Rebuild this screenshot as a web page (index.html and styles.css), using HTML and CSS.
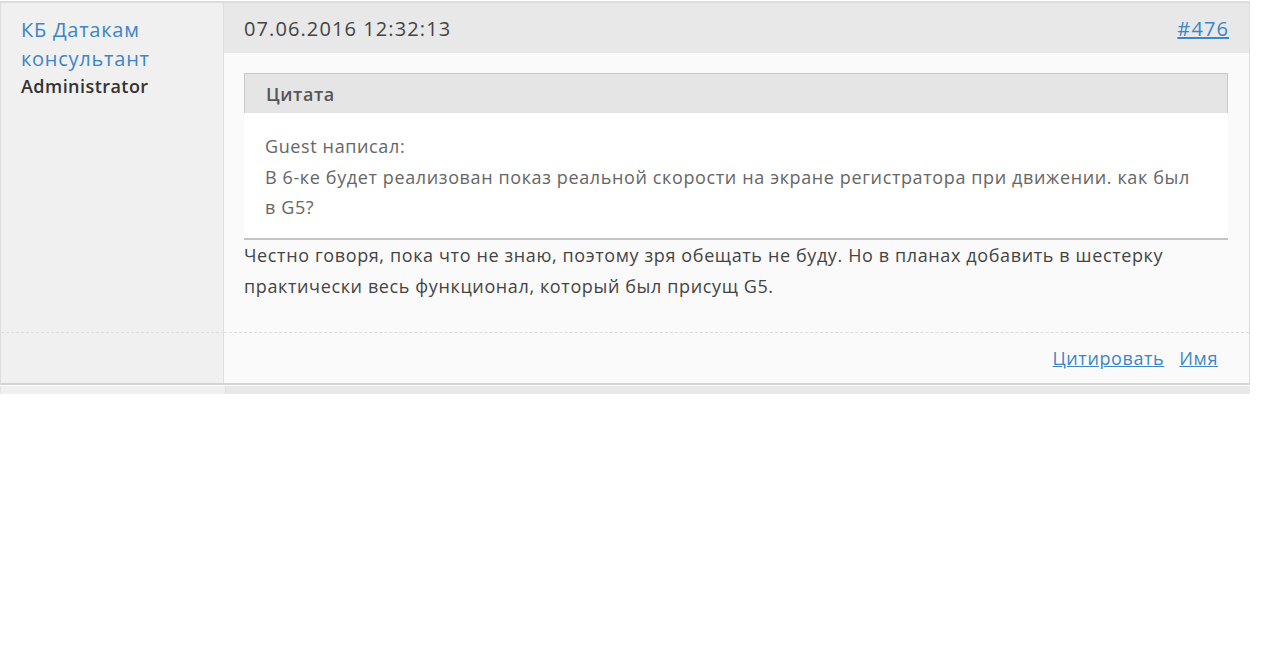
FILE: index.html
```html
<!DOCTYPE html>
<html lang="ru">
<head>
<meta charset="utf-8">
<title>Сообщение #476</title>
<link rel="stylesheet" href="styles.css">
</head>
<body>
<div class="page">
  <div class="post">
    <div class="author">
      <a class="author-name" href="#">КБ Датакам консультант</a>
      <div class="author-role">Administrator</div>
    </div>
    <div class="main">
      <div class="post-head">
        <span class="post-date">07.06.2016 12:32:13</span>
        <a class="post-num" href="#">#476</a>
      </div>
      <div class="post-body">
        <div class="quote">
          <div class="quote-title">Цитата</div>
          <div class="quote-text">Guest написал:<br>В 6-ке будет реализован показ реальной скорости на экране регистратора при движении. как был в G5?</div>
        </div>
        <div class="message">Честно говоря, пока что не знаю, поэтому зря обещать не буду. Но в планах добавить в шестерку практически весь функционал, который был присущ G5.</div>
      </div>
    </div>
    <div class="foot-left"></div>
    <div class="foot-right">
      <a href="#">Цитировать</a>
      <a href="#">Имя</a>
    </div>
  </div>
  <div class="next-row">
    <div class="next-left"></div>
    <div class="next-right"></div>
  </div>
</div>
</body>
</html>
```
FILE: styles.css
```css
html, body {
  margin: 0;
  padding: 0;
  background: #fff;
}
body {
  font-family: "Open Sans", "DejaVu Sans", sans-serif;
  color: #444;
}
a {
  color: #2f7fc0;
}
.page {
  width: 1250px;
  padding-top: 1px;
}
.post {
  display: grid;
  grid-template-columns: 223px 1fr;
  border-top: 2px solid #dcdcdc;
  border-left: 1px solid #dcdcdc;
  border-right: 1px solid #dcdcdc;
  border-bottom: 2px solid #d4d4d4;
}
.author {
  background: #f0f0f0;
  border-right: 1px solid #dedede;
  padding: 12px 10px 0 20px;
  border-bottom: 1px dashed #dddddd;
}
.author-name {
  display: block;
  font-size: 20px;
  line-height: 29px;
  letter-spacing: 0.75px;
  text-decoration: none;
  color: #3a86c8;
  width: 150px;
}
.author-role {
  font-size: 18px;
  font-weight: 600;
  letter-spacing: 0.45px;
  color: #333;
  line-height: 26px;
}
.main {
  background: #fafafa;
  border-bottom: 1px dashed #dddddd;
}
.post-head {
  display: flex;
  justify-content: space-between;
  align-items: center;
  height: 50px;
  background: #e8e8e8;
  padding: 0 20px;
  font-size: 20px;
  letter-spacing: 1.1px;
}
.post-date {
  color: #444;
}
.post-num {
  color: #3a86c8;
}
.post-body {
  padding: 20px 21px 30px 20px;
}
.quote {
  background: #fff;
  border-bottom: 2px solid #c4c4c4;
}
.quote-title {
  background: #e5e5e5;
  border: 1px solid #c9c9c9;
  border-bottom: none;
  height: 39px;
  line-height: 40px;
  padding: 0 21px;
  font-size: 18px;
  font-weight: 600;
  letter-spacing: 0.6px;
  color: #555;
}
.quote-text {
  padding: 18px 30px 15px 21px;
  font-size: 18px;
  line-height: 30.5px;
  letter-spacing: 0.62px;
  color: #666;
}
.message {
  padding-top: 0;
  font-size: 18px;
  line-height: 31px;
  letter-spacing: 0.62px;
  color: #444;
}
.foot-left {
  background: #f0f0f0;
  border-right: 1px solid #dedede;
  height: 50px;
}
.foot-right {
  background: #fafafa;
  display: flex;
  justify-content: flex-end;
  align-items: center;
  gap: 15px;
  padding-right: 31px;
  font-size: 18px;
  letter-spacing: 0.6px;
}
.foot-right a {
  color: #3a86c8;
}
.next-row {
  display: grid;
  grid-template-columns: 224px 1fr;
  height: 8px;
  margin-top: 1px;
  border-left: 1px solid #e4e4e4;
}
.next-left {
  background: #f0f0f0;
}
.next-right {
  background: #e8e8e8;
  border-left: 1px solid #e0e0e0;
}
```
